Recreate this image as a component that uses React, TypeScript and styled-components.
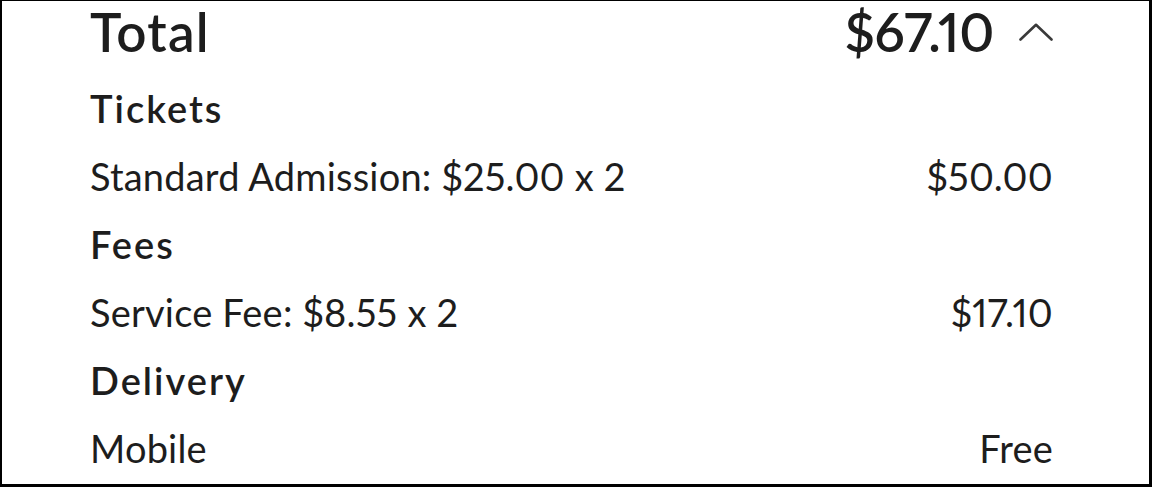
import styled, { createGlobalStyle } from 'styled-components';

const GlobalStyle = createGlobalStyle`
  html, body {
    margin: 0;
    padding: 0;
    background: #ffffff;
  }

  body {
    font-family: Lato, "Noto Sans", sans-serif;
    font-variant-numeric: proportional-nums;
    color: #1d1d1d;
  }
`;

const Frame = styled.main`
  box-sizing: border-box;
  display: flex;
  flex-direction: column;
  width: 1152px;
  height: 487px;
  padding: 0 96px 0 88px;
  border-style: solid;
  border-color: #000000;
  border-width: 1px 3px 3px 2px;
  background: #ffffff;
  overflow: hidden;
`;

const Header = styled.header`
  display: flex;
  align-items: center;
  justify-content: space-between;
  flex-shrink: 0;
  height: 61px;
  margin-bottom: 12px;
`;

const Title = styled.h1`
  margin: 0;
  font-size: 53px;
  font-weight: 600;
  line-height: 1;
  letter-spacing: 1.2px;
`;

const TotalGroup = styled.div`
  display: flex;
  align-items: center;
  gap: 25px;
`;

const Amount = styled.span`
  font-size: 53px;
  font-weight: 600;
  line-height: 1;
  letter-spacing: -0.3px;
`;

const Section = styled.section`
  display: flex;
  flex-direction: column;
`;

const Heading = styled.h2`
  display: flex;
  align-items: center;
  height: 68px;
  margin: 0;
  font-size: 38px;
  font-weight: 600;
  line-height: 1;
  letter-spacing: 2px;
`;

const Row = styled.div`
  display: flex;
  align-items: center;
  justify-content: space-between;
  height: 68px;
  font-size: 38px;
  font-weight: 400;
  line-height: 1;
  letter-spacing: 0.2px;
`;

const Chevron = () => (
  <svg width="34" height="18" viewBox="0 0 34 18" fill="none">
    <polyline
      points="1.5,16.5 17,1.8 32.5,16.5"
      stroke="#3a3a3a"
      strokeWidth="2.6"
      strokeLinecap="round"
      strokeLinejoin="round"
    />
  </svg>
);

const sections = [
  { title: 'Tickets', label: 'Standard Admission: $25.00 x 2', value: '$50.00' },
  { title: 'Fees', label: 'Service Fee: $8.55 x 2', value: '$17.10' },
  { title: 'Delivery', label: 'Mobile', value: 'Free' },
];

const App = () => {
  return (
    <>
      <GlobalStyle />
      <Frame>
        <Header>
          <Title>Total</Title>
          <TotalGroup>
            <Amount>$67.10</Amount>
            <Chevron />
          </TotalGroup>
        </Header>

        {sections.map((s) => (
          <Section key={s.title}>
            <Heading>{s.title}</Heading>
            <Row>
              <span>{s.label}</span>
              <span>{s.value}</span>
            </Row>
          </Section>
        ))}
      </Frame>
    </>
  );
};

export default App;
